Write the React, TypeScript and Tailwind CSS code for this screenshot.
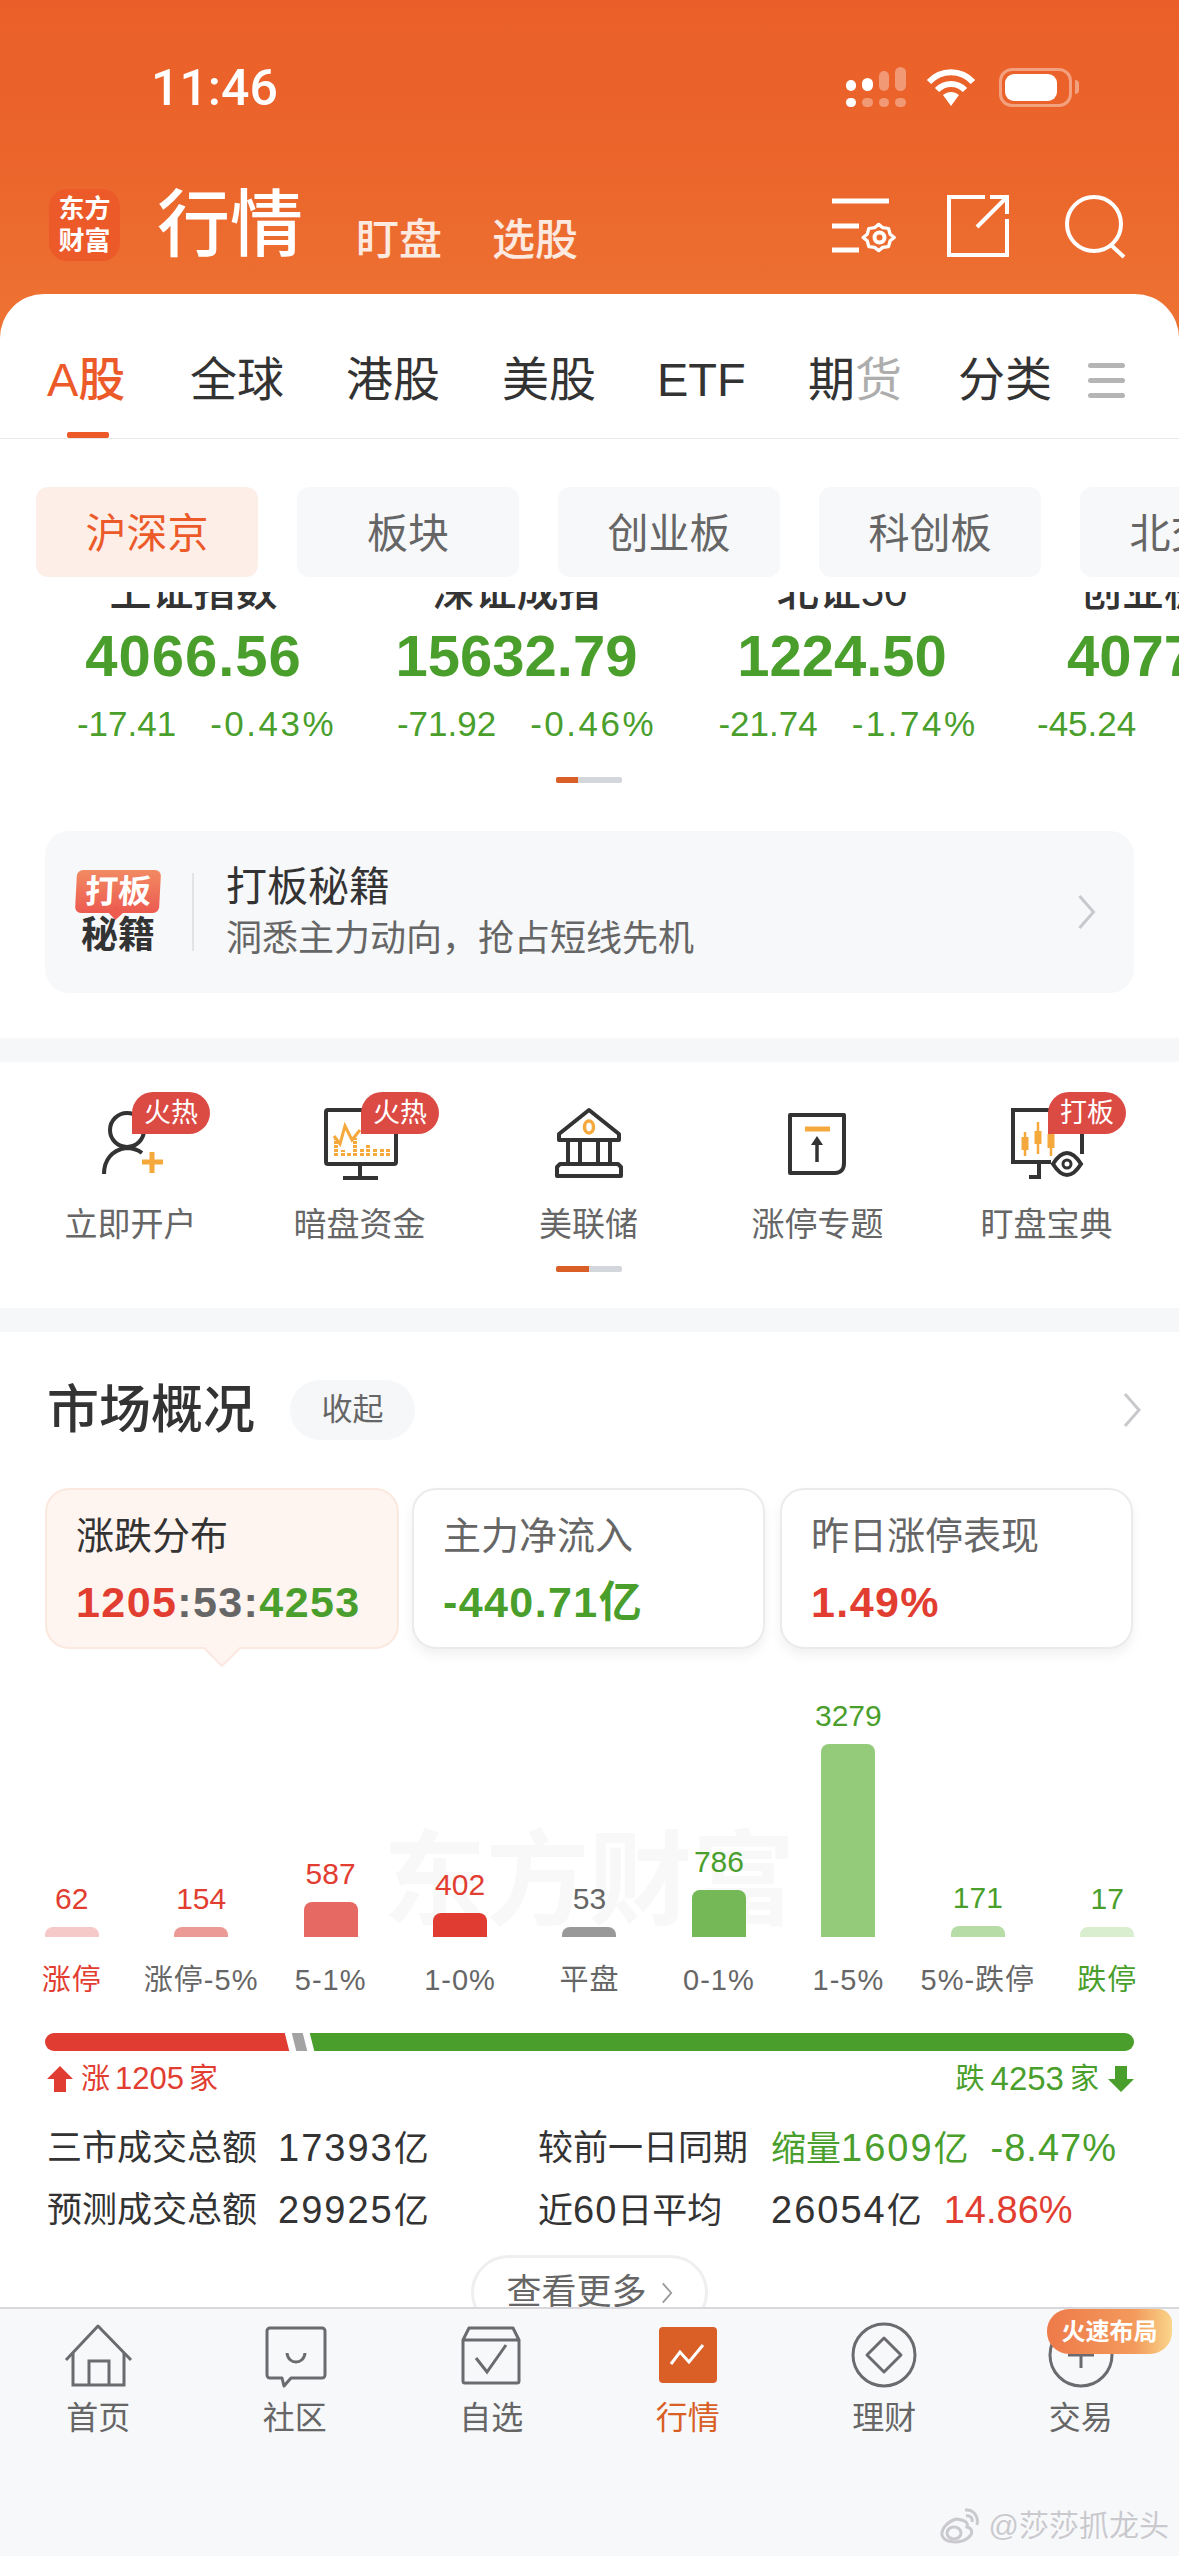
import type { ReactNode } from 'react';

const navItems = [
  { label: '立即开户', badge: '火热', icon: <PersonIcon /> },
  { label: '暗盘资金', badge: '火热', icon: <MonitorIcon /> },
  { label: '美联储', badge: '', icon: <BankIcon /> },
  { label: '涨停专题', badge: '', icon: <DocIcon /> },
  { label: '盯盘宝典', badge: '打板', icon: <EyeMonitorIcon /> },
];

const bars = [
  { value: '62', label: '涨停', h: 'h-[10px]', bar: 'bg-[#F5C9C7]', text: 'text-[#E23D31]', labelText: 'text-[#E23D31]' },
  { value: '154', label: '涨停-5%', h: 'h-[10px]', bar: 'bg-[#EB9A95]', text: 'text-[#E23D31]', labelText: 'text-[#666666]' },
  { value: '587', label: '5-1%', h: 'h-[35px]', bar: 'bg-[#E66A63]', text: 'text-[#E23D31]', labelText: 'text-[#666666]' },
  { value: '402', label: '1-0%', h: 'h-[24px]', bar: 'bg-[#E03C31]', text: 'text-[#E23D31]', labelText: 'text-[#666666]' },
  { value: '53', label: '平盘', h: 'h-[10px]', bar: 'bg-[#999999]', text: 'text-[#666666]', labelText: 'text-[#666666]' },
  { value: '786', label: '0-1%', h: 'h-[47px]', bar: 'bg-[#74B857]', text: 'text-[#4A9F2C]', labelText: 'text-[#666666]' },
  { value: '3279', label: '1-5%', h: 'h-[193px]', bar: 'bg-[#93CB7A]', text: 'text-[#4A9F2C]', labelText: 'text-[#666666]' },
  { value: '171', label: '5%-跌停', h: 'h-[11px]', bar: 'bg-[#B7DCA5]', text: 'text-[#4A9F2C]', labelText: 'text-[#666666]' },
  { value: '17', label: '跌停', h: 'h-[10px]', bar: 'bg-[#D9EDCF]', text: 'text-[#4A9F2C]', labelText: 'text-[#4A9F2C]' },
];

const indexes = [
  { name: '上证指数', value: '4066.56', a: '-17.41', b: '-0.43%', w: 'w-[323px]', shift: 'ml-[26px]', track: 'tracking-[1px]' },
  { name: '深证成指', value: '15632.79', a: '-71.92', b: '-0.46%', w: 'w-[323px]', shift: 'ml-[20px]', track: '' },
  { name: '北证50', value: '1224.50', a: '-21.74', b: '-1.74%', w: 'w-[328px]', shift: 'ml-[12px]', track: '' },
];

function Chevron({ className }: { className: string }) {
  return (
    <svg viewBox="0 0 20 36" fill="none" className={className}>
      <path d="M3 2l14 16L3 34" stroke="currentColor" strokeWidth="3" />
    </svg>
  );
}

function PersonIcon() {
  return (
    <svg viewBox="0 0 110 100" className="w-[110px] h-[100px]" fill="none">
      <circle cx="51" cy="34" r="17" stroke="#333" strokeWidth="4" />
      <path d="M28 78c0-14 8-24 22-26 6 0 11 1 16 5" stroke="#333" strokeWidth="4" />
      <path d="M76 56v21M66 66h21" stroke="#F5A83C" strokeWidth="5" />
    </svg>
  );
}

function MonitorIcon() {
  return (
    <svg viewBox="0 0 110 100" className="w-[110px] h-[100px]" fill="none">
      <rect x="21" y="14" width="70" height="54" rx="2" stroke="#333" strokeWidth="4" />
      <path d="M55 68v14M38 82h35" stroke="#333" strokeWidth="4" />
      <path d="M29 40l6 8 5-18 7 14 8-10" stroke="#F5A83C" strokeWidth="3" />
      <path d="M31 60V42M38 60v-6M44 60v-4M50 60V42M57 60v-8M63 60V48M70 60v-8M77 60v-8M83 60v-8" stroke="#F5A83C" strokeWidth="4" strokeDasharray="3 1" />
    </svg>
  );
}

function BankIcon() {
  return (
    <svg viewBox="0 0 110 100" className="w-[110px] h-[100px]" fill="none" stroke="#333" strokeWidth="4">
      <path d="M55 14l30 24v6H25v-6z" strokeLinejoin="round" />
      <path d="M34 44v24M46 44v24M64 44v24M76 44v24" />
      <path d="M26 68h58l3 3v9H23v-9z" strokeLinejoin="round" />
      <ellipse cx="55" cy="31" rx="4.5" ry="6" stroke="#F5A83C" strokeWidth="3.5" />
    </svg>
  );
}

function DocIcon() {
  return (
    <svg viewBox="0 0 110 100" className="w-[110px] h-[100px]" fill="none">
      <path d="M27 19h54v48c0 6-3 10-9 10H27z" stroke="#333" strokeWidth="4" strokeLinejoin="round" />
      <path d="M42 33h25" stroke="#F5A83C" strokeWidth="5" />
      <path d="M54 66V46" stroke="#333" strokeWidth="3.5" />
      <path d="M54 40l6 9H48z" fill="#333" />
    </svg>
  );
}

function EyeMonitorIcon() {
  return (
    <svg viewBox="0 0 110 100" className="w-[110px] h-[100px]" fill="none">
      <path d="M90 58V14H21v52h38" stroke="#333" strokeWidth="4" />
      <path d="M47 68v13H37" stroke="#333" strokeWidth="4" />
      <path d="M33 36v24M46 26v32M59 34v26" stroke="#F5A83C" strokeWidth="2.5" />
      <path d="M33 41v13M46 35v13M59 38v14" stroke="#F5A83C" strokeWidth="7" />
      <path d="M61 68c5-8 9-11 14-11s9 3 14 11c-5 8-9 11-14 11s-9-3-14-11z" fill="#fff" stroke="#333" strokeWidth="4" />
      <circle cx="75" cy="68" r="4" stroke="#333" strokeWidth="3" />
    </svg>
  );
}

function TabIcon({ children }: { children: ReactNode }) {
  return (
    <svg viewBox="0 0 80 70" className="w-[80px] h-[70px]" fill="none" stroke="#6B6B6F" strokeWidth="3">
      {children}
    </svg>
  );
}

const tabs: { label: string; active?: boolean; icon: ReactNode }[] = [
  {
    label: '首页',
    icon: (
      <TabIcon>
        <path d="M8 38L40 4l33 34" strokeLinejoin="round" />
        <path d="M15 31v32h51V31M31 63V39h20v24" />
      </TabIcon>
    ),
  },
  {
    label: '社区',
    icon: (
      <TabIcon>
        <path d="M15 6h52a3 3 0 013 3v44a3 3 0 01-3 3H36l-7 8-2-8H15a3 3 0 01-3-3V9a3 3 0 013-3z" strokeLinejoin="round" />
        <path d="M32 31c1 12 17 12 18 0" />
      </TabIcon>
    ),
  },
  {
    label: '自选',
    icon: (
      <TabIcon>
        <path d="M12 18L18 6h44l6 12v41a2 2 0 01-2 2H14a2 2 0 01-2-2zM12 18h56" strokeLinejoin="round" />
        <path d="M25 36l11 14 19-27" />
      </TabIcon>
    ),
  },
  {
    label: '行情',
    active: true,
    icon: (
      <svg viewBox="0 0 80 70" className="w-[80px] h-[70px]" fill="none">
        <rect x="11" y="5" width="58" height="56" rx="4" fill="#D95F26" />
        <path d="M23 42l9-12 9 10 14-17" stroke="#fff" strokeWidth="3" />
      </svg>
    ),
  },
  {
    label: '理财',
    icon: (
      <TabIcon>
        <circle cx="40" cy="33" r="31" />
        <path d="M40 16l17 17-17 17-17-17z" strokeLinejoin="round" />
      </TabIcon>
    ),
  },
  {
    label: '交易',
    icon: (
      <TabIcon>
        <circle cx="40" cy="33" r="31" />
        <path d="M40 20v26M27 33h26" />
      </TabIcon>
    ),
  },
];

export default function App() {
  return (
    <div className="w-[1179px] h-[2556px] overflow-hidden flex flex-col bg-white text-[#333333] font-['Liberation_Sans','Noto_Sans_CJK_SC',sans-serif]">
      <div className="shrink-0 bg-[linear-gradient(180deg,#EA5F29_0%,#EB662C_40%,#F07C38_100%)]">
        <div className="h-[294px] relative">
          {/* status bar */}
          <div className="h-[186px] flex items-start">
            <span className="mt-[56px] ml-[151px] text-[50px] leading-[64px] font-medium text-white font-['Roboto',sans-serif]">11:46</span>
            <div className="mt-[67px] ml-[568px] grid grid-cols-4 gap-x-[6px] gap-y-[7px] w-[60px] h-[40px] items-end">
              <span className="h-[11px] rounded-full bg-white" />
              <span className="h-[13px] rounded-full bg-white" />
              <span className="h-[20px] rounded-full bg-white/35" />
              <span className="h-[24px] rounded-full bg-white/35" />
              <span className="h-[9px] rounded-full bg-white" />
              <span className="h-[9px] rounded-full bg-white/35" />
              <span className="h-[9px] rounded-full bg-white/35" />
              <span className="h-[9px] rounded-full bg-white/35" />
            </div>
            <svg viewBox="0 0 50 40" fill="none" className="w-[50px] h-[40px] mt-[67px] ml-[20px]">
              <path d="M3 15c12-13 32-13 44 0" stroke="#fff" strokeWidth="6" />
              <path d="M11 23c8-8 20-8 28 0" stroke="#fff" strokeWidth="6" />
              <path d="M17 28c5-4 11-4 16 0l-8 11z" fill="#fff" />
            </svg>
            <div className="mt-[68px] ml-[23px] w-[73px] h-[39px] rounded-[13px] border-[3px] border-white/40 p-[3px]">
              <div className="w-[52px] h-full rounded-[9px] bg-white" />
            </div>
            <span className="mt-[80px] ml-[3px] w-[4px] h-[14px] rounded-r-full bg-white/40" />
          </div>
          {/* title row */}
          <div className="flex items-end h-[88px]">
            <div className="ml-[49px] mb-[13px] w-[71px] h-[72px] rounded-[18px] bg-[#EC5A2A] flex flex-col items-center justify-center text-white font-bold text-[26px] leading-[32px]">
              <span>东方</span>
              <span>财富</span>
            </div>
            <span className="ml-[37px] mb-[9px] text-[73px] leading-[80px] font-medium text-white">行情</span>
            <span className="ml-[53px] mb-[6px] text-[43px] leading-[56px] text-white/85 font-medium">盯盘</span>
            <span className="ml-[50px] mb-[6px] text-[43px] leading-[56px] text-white/85 font-medium">选股</span>
            <svg viewBox="0 0 300 70" fill="none" stroke="#fff" className="ml-[252px] mb-[11px] w-[300px] h-[70px]" strokeWidth="4">
              <path d="M2 8h57M2 33h27M2 57h27" strokeWidth="5" />
              <path d="M45 36l5-4 2-7 7-1 5-4 5 4 7 1 2 7 5 4-5 4-2 7-7 1-5 4-5-4-7-1-2-7z" strokeLinejoin="round" transform="translate(-3.8 15) scale(.82)" />
              <circle cx="49.5" cy="44.5" r="5" />
              <path d="M155 4h-36v58h58V26" />
              <path d="M147 34l30-30M160 4h17v17" />
              <circle cx="264" cy="31" r="27" />
              <path d="M282 53l12 11" />
            </svg>
          </div>
        </div>
        {/* market tabs */}
        <div className="h-[145px] rounded-t-[44px] bg-white border-b border-[#E8E8E8] relative">
          <div className="flex items-center h-[144px] pt-[28px] text-[47px] leading-[60px] text-[#333333]">
            <span className="ml-[47px] w-[143px] font-medium text-[#EC5A2A]">A股</span>
            <span className="w-[156px]">全球</span>
            <span className="w-[156px]">港股</span>
            <span className="w-[155px]">美股</span>
            <span className="w-[151px]">ETF</span>
            <span className="w-[150px]">期<span className="text-[#ADADAD]">货</span></span>
            <span className="w-[130px]">分类</span>
            <div className="flex flex-col gap-[10px]">
              <span className="w-[37px] h-[5px] rounded-full bg-[#B5B5B5]" />
              <span className="w-[37px] h-[5px] rounded-full bg-[#B5B5B5]" />
              <span className="w-[37px] h-[5px] rounded-full bg-[#B5B5B5]" />
            </div>
          </div>
          <span className="absolute left-[67px] bottom-0 w-[42px] h-[6px] rounded-[2px] bg-[#EC5A2A]" />
        </div>
      </div>

      <main className="flex-1 min-h-0 overflow-hidden">
        {/* sub tabs */}
        <div className="flex gap-[39px] pl-[36px] mt-[48px] h-[90px] overflow-hidden">
          <div className="w-[222px] shrink-0 pt-[5px] rounded-[12px] bg-[#FDEFE8] flex items-center justify-center text-[41px] text-[#EC5A2A]">沪深京</div>
          {['板块', '创业板', '科创板', '北交所'].map((t) => (
            <div key={t} className="w-[222px] shrink-0 pt-[5px] rounded-[12px] bg-[#F7F8FA] flex items-center justify-center text-[41px] text-[#666666]">{t}</div>
          ))}
        </div>

        {/* index row */}
        <div className="flex pl-[32px] mt-[15px] overflow-hidden">
          {indexes.map((x) => (
            <div key={x.name} className={`${x.w} shrink-0 flex flex-col items-center`}>
              <div className="h-[27px] overflow-hidden">
                <div className="-mt-[20px] text-[42px] leading-[40px] font-medium text-[#333333]">{x.name}</div>
              </div>
              <div className={`mt-[9px] text-[58px] leading-[56px] font-bold text-[#4A9F2C] ${x.track}`}>{x.value}</div>
              <div className={`mt-[18px] flex gap-[34px] text-[35px] leading-[44px] text-[#4A9F2C] ${x.shift}`}>
                <span>{x.a}</span>
                <span className="tracking-[2.5px]">{x.b}</span>
              </div>
            </div>
          ))}
          <div className="w-[340px] shrink-0 flex flex-col">
            <div className="h-[27px] overflow-hidden pl-[74px]">
              <div className="-mt-[20px] text-[42px] leading-[40px] font-medium whitespace-nowrap text-[#333333]">创业板指</div>
            </div>
            <div className="mt-[9px] pl-[61px] text-[58px] leading-[56px] font-bold text-[#4A9F2C]">4077</div>
            <div className="mt-[18px] pl-[31px] text-[35px] leading-[44px] text-[#4A9F2C]">-45.24</div>
          </div>
        </div>
        <div className="mt-[31px] ml-[556px] w-[66px] h-[6px] rounded-[2px] bg-[#D3D6DB] overflow-hidden">
          <div className="w-[22px] h-full bg-[#D95F26]" />
        </div>

        {/* banner */}
        <div className="mt-[48px] mx-[45px] h-[162px] rounded-[24px] bg-[#F7F8FA] flex items-center">
          <div className="ml-[31px] w-[84px] flex flex-col items-center">
            <div className="relative w-[84px] h-[43px] -skew-x-3 rounded-[6px] bg-[linear-gradient(180deg,#F28A62,#EC5A50)] flex items-center justify-center text-white font-bold text-[33px] leading-[40px]">
              打板
              <span className="absolute left-[36px] -bottom-[5px] w-[10px] h-[10px] rotate-45 bg-[#EC5A50]" />
            </div>
            <div className="mt-[5px] text-[37px] leading-[36px] font-bold text-[#333333]">秘籍</div>
          </div>
          <span className="ml-[32px] w-[2px] h-[78px] bg-[#E2E3E6]" />
          <div className="ml-[32px] flex-1">
            <div className="text-[41px] leading-[54px] text-[#333333]">打板秘籍</div>
            <div className="text-[36px] leading-[50px] text-[#666666]">洞悉主力动向，抢占短线先机</div>
          </div>
          <Chevron className="w-[21px] h-[36px] mr-[37px] text-[#C8C9CC]" />
        </div>

        <div className="mt-[45px] h-[24px] bg-[#F6F7F9]" />

        {/* quick entries */}
        <div className="h-[246px] pt-[34px] relative">
          <div className="grid grid-cols-5 ml-[16px] w-[1145px]">
            {navItems.map((n) => (
              <div key={n.label} className="relative flex flex-col items-center">
                {n.icon}
                {n.badge && (
                  <span className="absolute left-[116px] -top-[4px] w-[78px] h-[42px] rounded-[21px] rounded-bl-none bg-[#DC4A44] text-white text-[27px] leading-[42px] text-center">{n.badge}</span>
                )}
                <span className="mt-[8px] text-[33px] leading-[42px] text-[#666666] whitespace-nowrap">{n.label}</span>
              </div>
            ))}
          </div>
          <div className="mt-[20px] ml-[556px] w-[66px] h-[6px] rounded-[2px] bg-[#D3D6DB] overflow-hidden">
            <div className="w-[33px] h-full bg-[#D95F26]" />
          </div>
        </div>

        <div className="h-[24px] bg-[#F6F7F9]" />

        {/* market overview */}
        <div className="pt-[48px] flex items-center h-[108px]">
          <span className="ml-[47px] text-[52px] leading-[60px] font-medium text-[#333333]">市场概况</span>
          <span className="ml-[35px] w-[125px] h-[60px] rounded-full bg-[#F6F7F9] flex items-center justify-center text-[31px] text-[#666666]">收起</span>
          <Chevron className="ml-auto mr-[37px] w-[20px] h-[36px] text-[#C8C9CC]" />
        </div>

        <div className="mt-[48px] ml-[45px] flex">
          <div className="relative w-[354px] h-[161px] rounded-[24px] bg-[#FEF4F0] border-2 border-[#FBE8DF] pl-[29px] pt-[21px]">
            <div className="text-[38px] leading-[50px] text-[#333333]">涨跌分布</div>
            <div className="mt-[16px] text-[43px] leading-[50px] font-bold tracking-[1.4px]">
              <span className="text-[#E23D31]">1205</span>
              <span className="text-[#666666]">:53:</span>
              <span className="text-[#4A9F2C]">4253</span>
            </div>
            <svg viewBox="0 0 38 20" className="absolute left-[156px] -bottom-[20px] w-[38px] h-[20px]">
              <path d="M0 0L19 19 38 0" fill="#FEF4F0" stroke="#FBE8DF" strokeWidth="2" />
            </svg>
          </div>
          <div className="ml-[13px] w-[353px] h-[161px] rounded-[24px] bg-white border-2 border-[#EBEBEB] shadow-[0_6px_12px_rgba(0,0,0,0.06)] pl-[29px] pt-[21px]">
            <div className="text-[38px] leading-[50px] text-[#666666]">主力净流入</div>
            <div className="mt-[16px] text-[43px] leading-[50px] font-bold text-[#4A9F2C] tracking-[1.4px]">-440.71亿</div>
          </div>
          <div className="ml-[15px] w-[353px] h-[161px] rounded-[24px] bg-white border-2 border-[#EBEBEB] shadow-[0_6px_12px_rgba(0,0,0,0.06)] pl-[29px] pt-[21px]">
            <div className="text-[38px] leading-[50px] text-[#666666]">昨日涨停表现</div>
            <div className="mt-[16px] text-[43px] leading-[50px] font-bold text-[#E23D31] tracking-[1.4px]">1.49%</div>
          </div>
        </div>

        {/* distribution chart */}
        <div className="relative mt-[18px] h-[270px] grid grid-cols-9 items-end px-[7px]">
          <span className="absolute left-[383px] bottom-[2px] text-[103px] leading-[106px] font-bold text-[#F8F8F8] whitespace-nowrap">东方财富</span>
          {bars.map((b) => (
            <div key={b.label} className="relative flex flex-col items-center">
              <span className={`${b.text} text-[30px] leading-[40px] mb-[8px]`}>{b.value}</span>
              <span className={`${b.bar} ${b.h} w-[54px] rounded-t-[8px]`} />
            </div>
          ))}
        </div>
        <div className="mt-[23px] grid grid-cols-9 px-[7px]">
          {bars.map((b) => (
            <span key={b.label} className={`${b.labelText} text-[29px] leading-[40px] text-center whitespace-nowrap tracking-[1px]`}>{b.label}</span>
          ))}
        </div>

        <div className="mt-[33px] mx-[45px] h-[18px] rounded-full overflow-hidden flex gap-[7px]">
          <span className="w-[250px] -ml-[8px] bg-[#E03C31] skew-x-[14deg]" />
          <span className="w-[11px] bg-[#A3A3A3] skew-x-[14deg]" />
          <span className="flex-1 -mr-[8px] bg-[#4A9F2C] skew-x-[14deg]" />
        </div>

        <div className="mt-[8px] mx-[45px] h-[40px] flex items-center justify-between text-[29px] leading-[40px]">
          <div className="flex items-center text-[#E23D31]">
            <svg viewBox="0 0 26 26" className="w-[26px] h-[26px] ml-[2px]"><path d="M13 0l13 13h-7v13H7V13H0z" fill="#E03C31" /></svg>
            <span className="ml-[8px]">涨</span><span className="mx-[5px] text-[31px]">1205</span><span>家</span>
          </div>
          <div className="flex items-center text-[#4A9F2C]">
            <span>跌</span><span className="mx-[6px] text-[33px]">4253</span><span>家</span>
            <svg viewBox="0 0 26 26" className="w-[26px] h-[26px] ml-[9px]"><path d="M13 26L0 13h7V0h12v13h7z" fill="#4A9F2C" /></svg>
          </div>
        </div>

        <div className="mt-[24px] ml-[47px] grid grid-cols-[231px_260px_233px_auto] gap-y-[11px] text-[35px] leading-[50px] text-[#333333]">
          <span>三市成交总额</span>
          <span><span className="text-[38px] tracking-[2px]">17393</span>亿</span>
          <span>较前一日同期</span>
          <div className="flex gap-[22px] text-[#4A9F2C]"><span>缩量<span className="text-[38px] tracking-[2px]">1609</span>亿</span><span className="text-[38px] tracking-[1px]">-8.47%</span></div>
          <span>预测成交总额</span>
          <span><span className="text-[38px] tracking-[2px]">29925</span>亿</span>
          <span>近<span className="text-[38px] tracking-[1px]">60</span>日平均</span>
          <div className="flex gap-[22px]"><span><span className="text-[38px] tracking-[2px]">26054</span>亿</span><span className="text-[38px] text-[#E23D31]">14.86%</span></div>
        </div>

        <div className="mt-[19px] mx-auto w-[237px] h-[75px] rounded-full border-[3px] border-[#EFEFEF] flex items-center justify-center gap-[14px] text-[35px] text-[#666666]">
          查看更多
          <Chevron className="w-[12px] h-[24px] text-[#999999]" />
        </div>
      </main>

      {/* bottom tab bar */}
      <div className="relative shrink-0 h-[249px] bg-[#F7F8FA] border-t-2 border-[#D8D8DC] pt-[13px]">
        <div className="grid grid-cols-6">
          {tabs.map((t) => (
            <div key={t.label} className="flex flex-col items-center">
              {t.icon}
              <span className={`mt-[4px] text-[32px] leading-[44px] ${t.active ? 'text-[#D95F26]' : 'text-[#666666]'}`}>{t.label}</span>
            </div>
          ))}
        </div>
        <span className="absolute right-[7px] top-0 w-[125px] h-[45px] rounded-[22px] rounded-tr-[14px] bg-[linear-gradient(90deg,#EE7A4A,#F39A5C_70%,#FAD58A)] text-white font-bold text-[24px] leading-[45px] text-center">火速布局</span>
        <div className="absolute right-[10px] bottom-[8px] flex items-center gap-[8px] text-[30px] leading-[44px] text-[#C9C9CE] [text-shadow:0_0_2px_#ffffff]">
          <svg viewBox="0 0 42 38" fill="none" stroke="#C9C9CE" strokeWidth="3" className="w-[42px] h-[38px]">
            <path d="M17 12C8 15 2 22 3 28c2 8 18 9 26 3 6-5 4-10-1-11 2-5-3-7-11-8z" />
            <ellipse cx="15" cy="26" rx="7" ry="6" />
            <path d="M26 3c8-1 14 6 12 15M27 9c4-1 7 2 6 6" />
          </svg>
          <span>@莎莎抓龙头</span>
        </div>
      </div>
    </div>
  );
}
